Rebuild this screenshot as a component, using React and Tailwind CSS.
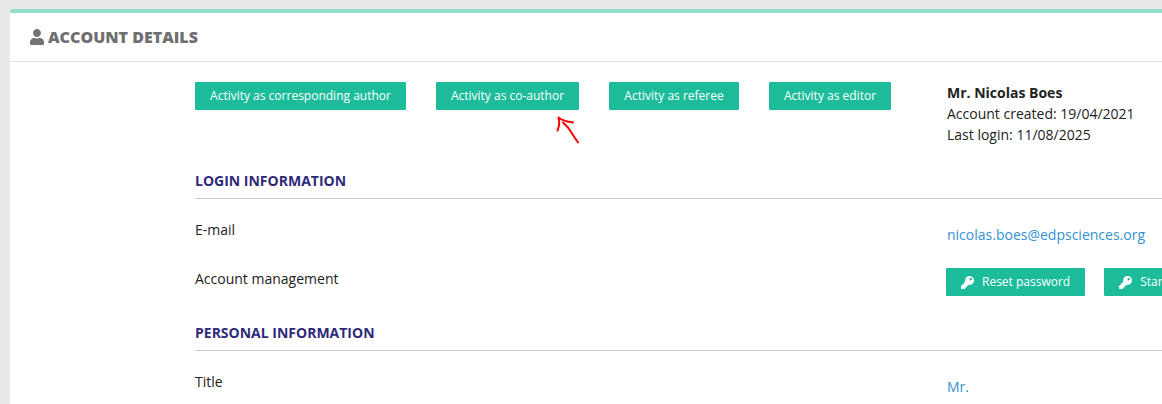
import { FaKey, FaUser } from 'react-icons/fa';

const activityLinks = [
  { label: 'Activity as corresponding author', width: 'w-[211px]' },
  { label: 'Activity as co-author', width: 'w-[143px]' },
  { label: 'Activity as referee', width: 'w-[130px]' },
  { label: 'Activity as editor', width: 'w-[122px]' },
];

function SectionTitle({ children, className = '' }) {
  return (
    <h3 className={`h-[28px] border-b border-[#cccccc] text-[14px] leading-[20px] font-bold text-[#2e2a78] ${className}`}>
      {children}
    </h3>
  );
}

function KeyButton({ label }) {
  return (
    <a className="flex h-7 shrink-0 items-center rounded-[1px] bg-[#1cbc9b] px-[15px] text-[12px] text-white">
      <FaKey className="mr-[8px] h-[13px] w-[13px]" />
      <span>{label}</span>
    </a>
  );
}

export default function App() {
  return (
    <div className="h-[404px] w-[1162px] overflow-hidden bg-[#e9e9e9] pl-[10px] pt-[9px] font-['Open_Sans',sans-serif] text-[14px] text-[#222222]">
      <div className="h-[395px] w-[1200px] rounded-t-[2px] border-t-4 border-[#8fdfcb] bg-white">
        {/* Header */}
        <div className="flex h-[49px] items-center border-b border-[#e3e3e3] pl-[19px]">
          <FaUser className="mr-[3px] h-4 w-4 text-[#737373]" />
          <h2 className="text-[16px] font-extrabold text-[#6f6f6f]">ACCOUNT DETAILS</h2>
        </div>

        <div className="relative pl-[185px] pt-[20px]">
          {/* Activity buttons + account info */}
          <div className="flex h-[89px]">
            <div className="flex w-[752px] gap-[30px]">
              {activityLinks.map((link) => (
                <a key={link.label} className={`flex h-7 items-center justify-center rounded-[1px] bg-[#1cbc9b] text-[12px] text-white ${link.width}`}>
                  {link.label}
                </a>
              ))}
            </div>
            <div className="leading-[21px]">
              <p className="font-bold">Mr. Nicolas Boes</p>
              <p>Account created: 19/04/2021</p>
              <p>Last login: 11/08/2025</p>
            </div>
          </div>

          <SectionTitle>LOGIN INFORMATION</SectionTitle>

          <div className="mt-[20px] flex h-[49px]">
            <div className="w-[752px]">E-mail</div>
            <a className="mt-[5px] text-[#3392cf]">nicolas.boes@edpsciences.org</a>
          </div>

          <div className="flex h-[43px]">
            <div className="w-[751px]">Account management</div>
            <div className="flex gap-[19px]">
              <KeyButton label="Reset password" />
              <KeyButton label="Start" />
            </div>
          </div>

          <SectionTitle className="mt-[12px]">PERSONAL INFORMATION</SectionTitle>

          <div className="mt-[20px] flex">
            <div className="w-[752px]">Title</div>
            <a className="mt-[5px] text-[#3392cf]">Mr.</a>
          </div>

          {/* hand drawn arrow on top of the page */}
          <svg className="absolute left-[536px] top-[47px]" width="40" height="40" viewBox="0 0 40 40" fill="none">
            <path
              d="M32 33.5 L22 18.5 L17 13.5 M12.5 8.5 C15 10.5 19 12.5 27 13.5 M12.5 8.5 C13.5 12 13 18 11.5 21.5"
              stroke="#ff0000"
              strokeWidth="2"
              strokeLinecap="round"
              strokeLinejoin="round"
            />
          </svg>
        </div>
      </div>
    </div>
  );
}
